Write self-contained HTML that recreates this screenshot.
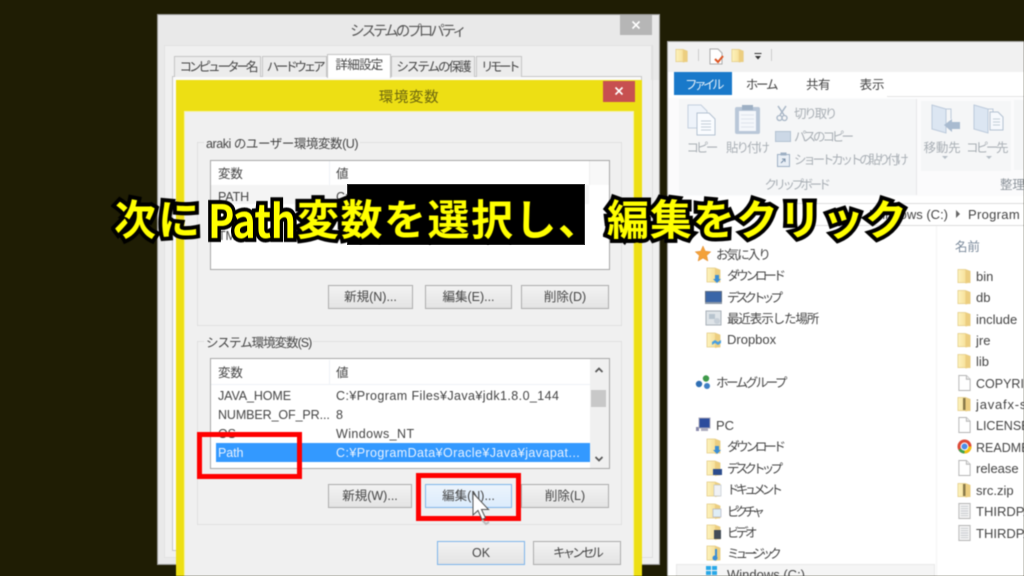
<!DOCTYPE html>
<html lang="ja"><head><meta charset="utf-8"><title>環境変数</title>
<style>
html,body{margin:0;padding:0;background:#1f1d04;}
#r{position:relative;width:1024px;height:576px;overflow:hidden;background:#1f1d04;font-family:"Liberation Sans","Noto Sans CJK JP",sans-serif;}
#u{position:absolute;left:0;top:0;width:1024px;height:576px;filter:blur(.55px);}
.b{position:absolute;box-sizing:border-box;}
.t{position:absolute;white-space:nowrap;font-size:12.5px;line-height:16px;height:16px;color:#444;letter-spacing:-.1px;margin-top:1px;}
.f{font-size:13px;letter-spacing:0;}
.v{letter-spacing:.42px;}
.c{transform:translateX(-50%);}
.btn{position:absolute;box-sizing:border-box;height:24px;background:linear-gradient(#f2f2f2,#e4e4e4);border:1px solid #acacac;text-align:center;font-size:12.5px;line-height:23px;color:#444;white-space:nowrap;}
.hi{border:1px solid #7eb4ea;background:linear-gradient(#ecf4fc,#dcecfc);}
.tab{position:absolute;box-sizing:border-box;background:#ececec;border:1px solid #c4c4c4;border-bottom:0;text-align:center;font-size:12.5px;line-height:20px;color:#444;white-space:nowrap;}
.red{position:absolute;box-sizing:border-box;border:5px solid #f00;}
.n{position:absolute;left:727px;}
.d{color:#a9afb5;}
svg.i{position:absolute;overflow:visible;}
.big{position:absolute;top:192px;height:52px;line-height:52px;white-space:nowrap;font-size:42px;font-weight:700;color:#ff0;-webkit-text-stroke:8px #000;paint-order:stroke fill;stroke-linejoin:round;font-family:"Noto Sans CJK JP",sans-serif;filter:blur(.4px);}
</style></head><body>
<div id="r">
<svg width="0" height="0" style="position:absolute">
<defs>
<linearGradient id="fg" x1="0" x2="1" y1="0" y2="0"><stop offset="0" stop-color="#fdf3bd"/><stop offset=".55" stop-color="#f8e3a0"/><stop offset="1" stop-color="#e8c770"/></linearGradient>
<symbol id="f" viewBox="0 0 16 18"><path d="M1 2h8l5 2v12H1z" fill="url(#fg)" stroke="#e4cc88" stroke-width=".8"/><path d="M9 2l5 2v12l-5 1z" fill="#ecce80"/></symbol>
<symbol id="p" viewBox="0 0 16 18"><path d="M2 1h8l4 4v12H2z" fill="#fff" stroke="#b4b4b4"/><path d="M10 1v4h4" fill="#eee" stroke="#b4b4b4"/></symbol>
<symbol id="x" viewBox="0 0 16 18"><path d="M2 1h12v16H2z" fill="#f4f4f4" stroke="#b4b4b4"/><path d="M4 4h8M4 6.500h8M4 9h8M4 11.500h8M4 14h8" stroke="#c4c8cc"/></symbol>
</defs></svg>
<div id="u">
<!-- system properties window -->
<div class="b" style="left:157px;top:14px;width:503px;height:551px;background:#e9e9e9;border:1px solid #9a9a9a;"></div>
<div class="b" style="left:620px;top:15px;width:32px;height:20px;background:#b6b6b6;"></div>
<svg class="i" style="left:631px;top:20px" width="10" height="10"><path d="M1.500 1.500l7 7M8.500 1.500l-7 7" stroke="#fff" stroke-width="1.600"/></svg>
<div class="t c" style="left:407px;top:22px;font-size:14.5px;line-height:18px;height:18px;letter-spacing:-3px;color:#555;">システムのプロパティ</div>
<div class="b" style="left:164px;top:45px;width:488px;height:513px;background:#f0f0f0;border:1px solid #e2e2e2;"></div>
<div class="b" style="left:172px;top:76px;width:470px;height:475px;background:#fafafa;border:1px solid #c8c8c8;"></div>
<div class="tab" style="left:174px;top:56px;width:87px;height:21px;letter-spacing:-3px;">コンピューター名</div>
<div class="tab" style="left:262px;top:56px;width:65px;height:21px;letter-spacing:-3.200px;">ハードウェア</div>
<div class="tab" style="left:327px;top:54px;width:64px;height:24px;background:#fff;line-height:21px;letter-spacing:-.7px;">詳細設定</div>
<div class="tab" style="left:391px;top:56px;width:84px;height:21px;letter-spacing:-2px;">システムの保護</div>
<div class="tab" style="left:476px;top:56px;width:46px;height:21px;letter-spacing:-3.500px;">リモート</div>
<!-- env var dialog -->
<div class="b" style="left:176px;top:80px;width:466px;height:496px;background:#eddf14;"></div>
<div class="b" style="left:603px;top:81px;width:32px;height:21px;background:#c75050;"></div>
<svg class="i" style="left:614px;top:86px" width="10" height="10"><path d="M1.500 1.500l7 7M8.500 1.500l-7 7" stroke="#fff" stroke-width="1.600"/></svg>
<div class="t c" style="left:409px;top:88px;font-size:14.500px;line-height:18px;height:18px;color:#6b6510;letter-spacing:.6px;">環境変数</div>
<div class="b" style="left:184px;top:111px;width:450px;height:465px;background:#f0f0f0;border:1px solid #f6f3b0;border-bottom:0;"></div>
<!-- user group -->
<div class="b" style="left:197px;top:142px;width:425px;height:184px;border:1px solid #e0e0e0;"></div>
<div class="t" style="left:204px;top:135px;padding:0 2px;background:#f0f0f0;letter-spacing:-.45px;">araki のユーザー環境変数(U)</div>
<div class="b" style="left:210px;top:160px;width:400px;height:110px;background:#fff;border:1px solid #a8a8a8;"></div>
<div class="b" style="left:211px;top:185px;width:378px;height:19px;background:#f4f4f4;"></div>
<div class="b" style="left:329px;top:161px;width:1px;height:24px;background:#eef2f6;"></div>
<div class="b" style="left:589px;top:161px;width:20px;height:24px;background:#f8f8f8;border-left:1px solid #eee;"></div>
<div class="t" style="left:218px;top:165px;">変数</div>
<div class="t" style="left:336px;top:165px;">値</div>
<div class="t" style="left:218px;top:188px;">PATH</div>
<div class="t" style="left:336px;top:188px;">C:</div>
<div class="t" style="left:218px;top:227px;">TMP</div>
<div class="btn" style="left:328px;top:285px;width:85px;">新規(N)...</div>
<div class="btn" style="left:425px;top:285px;width:87px;">編集(E)...</div>
<div class="btn" style="left:521px;top:285px;width:88px;">削除(D)</div>
<!-- system group -->
<div class="b" style="left:197px;top:341px;width:425px;height:184px;border:1px solid #e0e0e0;"></div>
<div class="t" style="left:204px;top:334px;padding:0 2px;background:#f0f0f0;letter-spacing:-1px;">システム環境変数(S)</div>
<div class="b" style="left:210px;top:358px;width:400px;height:111px;background:#fff;border:1px solid #a8a8a8;"></div>
<div class="b" style="left:590px;top:359px;width:19px;height:109px;background:#f0f0f0;"></div>
<div class="b" style="left:591px;top:390px;width:15px;height:17px;background:#c8c8c8;"></div>
<svg class="i" style="left:594px;top:366px" width="10" height="8"><path d="M1.500 6l3.500-3.500L8.500 6" stroke="#555" stroke-width="1.700" fill="none"/></svg>
<svg class="i" style="left:594px;top:455px" width="10" height="8"><path d="M1.500 2l3.500 3.500L8.500 2" stroke="#555" stroke-width="1.700" fill="none"/></svg>
<div class="b" style="left:329px;top:360px;width:1px;height:24px;background:#eef2f6;"></div>
<div class="b" style="left:211px;top:384px;width:379px;height:1px;background:#eef2f6;"></div>
<div class="t" style="left:218px;top:364px;">変数</div>
<div class="t" style="left:336px;top:364px;">値</div>
<div class="t" style="left:218px;top:387px;">JAVA_HOME</div>
<div class="t v" style="left:336px;top:387px;">C:¥Program Files¥Java¥jdk1.8.0_144</div>
<div class="t" style="left:218px;top:406px;">NUMBER_OF_PR...</div>
<div class="t" style="left:336px;top:406px;">8</div>
<div class="t" style="left:218px;top:425px;">OS</div>
<div class="t v" style="left:336px;top:425px;">Windows_NT</div>
<div class="b" style="left:216px;top:443px;width:374px;height:19px;background:#3399ff;"></div>
<div class="t" style="left:218px;top:444px;color:#e8f2ff;">Path</div>
<div class="t" style="left:336px;top:444px;color:#e8f2ff;letter-spacing:.42px;">C:¥ProgramData¥Oracle¥Java¥javapat...</div>
<div class="btn" style="left:328px;top:484px;width:84px;">新規(W)...</div>
<div class="btn hi" style="left:425px;top:484px;width:87px;">編集(N)...</div>
<div class="btn" style="left:521px;top:484px;width:88px;">削除(L)</div>
<div class="btn" style="left:437px;top:541px;width:88px;border:1px solid #7eb4ea;">OK</div>
<div class="btn" style="left:533px;top:541px;width:88px;letter-spacing:-2.900px;">キャンセル</div>
<!-- system window right strip -->
<div class="b" style="left:642px;top:80px;width:17px;height:484px;background:#efefef;"></div>
<div class="b" style="left:652px;top:45px;width:1px;height:513px;background:#dedede;"></div>
<div class="b" style="left:642px;top:557px;width:10px;height:1px;background:#dedede;"></div>
<!-- explorer -->
<div class="b" style="left:667px;top:41px;width:357px;height:535px;background:#fff;border:1px solid #a8a8a8;border-right:0;border-bottom:0;"></div>
<div class="b" style="left:668px;top:42px;width:356px;height:30px;background:#f1f1f1;"></div>
<svg class="i" style="left:675px;top:47px" width="14" height="17"><use href="#f"/></svg>
<div class="b" style="left:698px;top:49px;width:1px;height:12px;background:#ccc;"></div>
<svg class="i" style="left:709px;top:48px" width="16" height="17"><path d="M1 1h8l4 4v11H1z" fill="#fff" stroke="#aaa"/><path d="M6 11l3 3 5-6" stroke="#dd5522" stroke-width="2" fill="none"/></svg>
<svg class="i" style="left:731px;top:47px" width="14" height="17"><use href="#f"/></svg>
<svg class="i" style="left:754px;top:53px" width="8" height="8"><path d="M.5 0.500h7" stroke="#333"/><path d="M1 3h6L4 6.500z" fill="#333"/></svg>
<div class="b" style="left:771px;top:49px;width:1px;height:12px;background:#ccc;"></div>
<div class="b" style="left:668px;top:72px;width:356px;height:26px;background:#fff;"></div>
<div class="b" style="left:674px;top:72px;width:58px;height:23px;background:#1979ca;"></div>
<div class="t c" style="left:703px;top:76px;color:#e4f0fa;letter-spacing:-3.500px;">ファイル</div>
<div class="t c" style="left:761px;top:76px;letter-spacing:-2.200px;">ホーム</div>
<div class="t c" style="left:818px;top:76px;letter-spacing:-.5px;">共有</div>
<div class="t c" style="left:872px;top:76px;">表示</div>
<div class="b" style="left:668px;top:98px;width:356px;height:98px;background:#fbfbfc;"></div>
<div class="b" style="left:887px;top:96px;width:137px;height:1px;background:#e4e4e4;"></div>
<div class="b" style="left:679px;top:99px;width:238px;height:96px;background:#f5f6f7;border-right:1px solid #e8e8e8;"></div>
<div class="b" style="left:921px;top:101px;width:90px;height:70px;background:#f5f6f7;"></div>
<svg class="i" style="left:687px;top:104px" width="30" height="32"><path d="M1 1h13l6 6v17H1z" fill="#eef3fa" stroke="#c4d0de"/><path d="M10 9h12l6 6v16H10z" fill="#fafcff" stroke="#b4c2d2"/><path d="M14 17h10M14 20h10M14 23h10M14 26h10" stroke="#c4ced8"/></svg>
<svg class="i" style="left:734px;top:104px" width="28" height="32"><rect x="1" y="3" width="25" height="27" rx="2" fill="#b9c7d8"/><rect x="5" y="7" width="17" height="20" fill="#f4f7fb"/><rect x="8" y="1" width="11" height="5" fill="#9eb0c4"/><path d="M7 11h13M7 15h13M7 19h13M7 23h13" stroke="#dde4ec"/></svg>
<svg class="i" style="left:776px;top:105px" width="12" height="17"><path d="M2 1l6 9M10 1L4 10" stroke="#a8b6c6" stroke-width="1.500"/><circle cx="3.500" cy="13" r="2.500" fill="none" stroke="#a8b6c6" stroke-width="1.300"/><circle cx="8.500" cy="13" r="2.500" fill="none" stroke="#a8b6c6" stroke-width="1.300"/></svg>
<div class="b" style="left:775px;top:131px;width:16px;height:11px;background:#ccd8e6;border:1px solid #b4c2d2;"></div>
<svg class="i" style="left:777px;top:152px" width="13" height="15"><rect x=".5" y="2.500" width="12" height="12" fill="#e8eef5" stroke="#9eb0c4"/><rect x="3.500" y=".5" width="6" height="3" fill="#9eb0c4"/><path d="M4 11l4-4M5 7h3v3" stroke="#7a90a8" fill="none"/></svg>
<div class="t c d" style="left:701px;top:139px;letter-spacing:-2.800px;">コピー</div>
<div class="t c d" style="left:747px;top:139px;letter-spacing:-2px;">貼り付け</div>
<div class="t d" style="left:794px;top:105px;letter-spacing:-2.200px;">切り取り</div>
<div class="t d" style="left:794px;top:128px;letter-spacing:-3px;">パスのコピー</div>
<div class="t d" style="left:794px;top:151px;letter-spacing:-3.200px;">ショートカットの貼り付け</div>
<div class="t c d" style="left:796px;top:176px;letter-spacing:-3.500px;">クリップボード</div>
<svg class="i" style="left:931px;top:104px" width="30" height="34"><path d="M1 1l14 4v24L1 25z" fill="#dce6f2" stroke="#bccadb"/><path d="M15 5h5v10" fill="none" stroke="#bccadb"/><path d="M13 21l8-6v3h8v7h-8v3z" fill="#a9bbd0"/></svg>
<svg class="i" style="left:973px;top:104px" width="32" height="34"><path d="M1 1l14 4v24L1 25z" fill="#dce6f2" stroke="#bccadb"/><path d="M15 5h5v4" fill="none" stroke="#bccadb"/><path d="M17 8h8l5 5v13H17z" fill="#f6f9fd" stroke="#b4c2d2"/><path d="M20 15h7M20 18h7M20 21h7" stroke="#c4ced8"/></svg>
<div class="t c d" style="left:942px;top:139px;letter-spacing:-.2px;">移動先</div>
<div class="t c d" style="left:986px;top:139px;letter-spacing:-2.500px;">コピー先</div>
<svg class="i" style="left:942px;top:156px" width="60" height="5"><path d="M0 0h6L3 3z" fill="#b4bcc4"/><path d="M44 0h6L47 3z" fill="#b4bcc4"/></svg>
<div class="t" style="left:1000px;top:176px;color:#8d949b;">整理</div>
<div class="b" style="left:1014px;top:100px;width:10px;height:70px;background:#f5f6f7;"></div>
<!-- address -->
<div class="b" style="left:785px;top:203px;width:239px;height:23px;background:#fff;border:1px solid #dcdcdc;border-right:0;"></div>
<div class="t f" style="left:870px;top:206px;">Windows (C:)</div>
<svg class="i" style="left:955px;top:210px" width="6" height="8"><path d="M1 0l4 4-4 4z" fill="#666"/></svg>
<div class="t f" style="left:968px;top:206px;letter-spacing:.3px;">Program</div>
<!-- nav -->
<svg class="i" style="left:695px;top:246px" width="16" height="16"><path d="M8 0l2.300 5.200 5.500.6-4.100 3.700 1.200 5.500L8 12.100 3.100 15l1.200-5.500L.2 5.800l5.500-.6z" fill="#f3a13a" stroke="#e08a2a" stroke-width=".5"/></svg>
<div class="t" style="left:716px;top:246px;letter-spacing:-1.900px;">お気に入り</div>
<svg class="i" style="left:706px;top:266px" width="16" height="18"><use href="#f"/><path d="M9 9h4v4h2l-4 4-4-4h2z" fill="#3a8ed6"/></svg>
<div class="t n" style="top:267px;letter-spacing:-3.200px;">ダウンロード</div>
<svg class="i" style="left:705px;top:291px" width="17" height="14"><rect x=".5" y=".5" width="16" height="11" fill="#3a66a8" stroke="#5a6a80"/><rect y="11" width="17" height="2" fill="#8a96a6"/></svg>
<div class="t n" style="top:289px;letter-spacing:-3.800px;">デスクトップ</div>
<svg class="i" style="left:705px;top:310px" width="17" height="16"><rect x="1" y="1" width="15" height="14" fill="#dfe4e8" stroke="#a8b0b8"/><path d="M4 4h6v5H4z" fill="#b8c4ce"/><circle cx="12" cy="11" r="3" fill="#c8d0d8"/></svg>
<div class="t n" style="top:310px;letter-spacing:-1.100px;">最近表示した場所</div>
<svg class="i" style="left:706px;top:331px" width="16" height="18"><use href="#f"/><path d="M10 7l3 2 3-2v3l-3 2-3-2 -3 2v-3z" fill="#4aa0e0" transform="translate(-1 2)"/></svg>
<div class="t n f" style="top:331px;">Dropbox</div>
<svg class="i" style="left:695px;top:374px" width="16" height="16"><circle cx="4" cy="10" r="3.200" fill="#2f6fb4"/><circle cx="11" cy="4.500" r="3.200" fill="#3f9a4a"/><circle cx="12" cy="12" r="3" fill="#3f7fc4"/></svg>
<div class="t" style="left:716px;top:374px;letter-spacing:-2.500px;">ホームグループ</div>
<svg class="i" style="left:695px;top:417px" width="16" height="16"><rect x="1" y="10" width="3" height="4" fill="#88a"/><rect x="4" y="1" width="11" height="10" fill="#2c4c9c" stroke="#aab"/><rect x="6" y="11" width="7" height="3" fill="#aab"/></svg>
<div class="t f" style="left:716px;top:417px;">PC</div>
<svg class="i" style="left:706px;top:437px" width="16" height="18"><use href="#f"/><path d="M9 9h4v4h2l-4 4-4-4h2z" fill="#3a8ed6"/></svg>
<div class="t n" style="top:438px;letter-spacing:-3.200px;">ダウンロード</div>
<svg class="i" style="left:706px;top:459px" width="16" height="18"><use href="#f"/><rect x="7" y="10" width="9" height="6" fill="#2c4c8c"/></svg>
<div class="t n" style="top:460px;letter-spacing:-3.800px;">デスクトップ</div>
<svg class="i" style="left:706px;top:480px" width="16" height="18"><use href="#f"/><rect x="8" y="5" width="7" height="11" fill="#f0f2f5" stroke="#b8c0c8" stroke-width=".6"/></svg>
<div class="t n" style="top:481px;letter-spacing:-3.800px;">ドキュメント</div>
<svg class="i" style="left:706px;top:502px" width="16" height="18"><use href="#f"/><rect x="7" y="7" width="8" height="8" fill="#dfeef5" stroke="#aab" stroke-width=".6"/></svg>
<div class="t n" style="top:503px;letter-spacing:-4px;">ピクチャ</div>
<svg class="i" style="left:706px;top:523px" width="16" height="18"><use href="#f"/><rect x="8" y="7" width="7" height="9" fill="#444c56"/></svg>
<div class="t n" style="top:524px;letter-spacing:-3.500px;">ビデオ</div>
<svg class="i" style="left:706px;top:544px" width="16" height="18"><use href="#f"/><path d="M10 5v9" stroke="#3a8ed6" stroke-width="2"/><circle cx="9" cy="14" r="2.500" fill="#3a8ed6"/></svg>
<div class="t n" style="top:545px;letter-spacing:-4px;">ミュージック</div>
<div class="b" style="left:676px;top:564px;width:259px;height:12px;background:#f5f5f5;border:1px solid #e8e8e8;border-bottom:0;"></div>
<svg class="i" style="left:706px;top:566px" width="16" height="10"><rect width="5" height="4" fill="#29a8e8"/><rect x="6" width="5" height="4" fill="#29a8e8"/><rect y="5" width="5" height="4" fill="#29a8e8"/><rect x="6" y="5" width="5" height="4" fill="#29a8e8"/></svg>
<div class="t n f" style="top:566px;">Windows (C:)</div>
<div class="b" style="left:936px;top:226px;width:1px;height:350px;background:#f4f4f4;"></div>
<!-- files -->
<div class="t d" style="left:955px;top:238px;color:#7c8b9c;">名前</div>
<svg class="i" style="left:957px;top:267px" width="15" height="18"><use href="#f"/></svg><div class="t f" style="left:976px;top:268px;">bin</div>
<svg class="i" style="left:957px;top:288px" width="15" height="18"><use href="#f"/></svg><div class="t f" style="left:976px;top:289px;">db</div>
<svg class="i" style="left:957px;top:310px" width="15" height="18"><use href="#f"/></svg><div class="t f" style="left:976px;top:311px;">include</div>
<svg class="i" style="left:957px;top:331px" width="15" height="18"><use href="#f"/></svg><div class="t f" style="left:976px;top:332px;">jre</div>
<svg class="i" style="left:957px;top:352px" width="15" height="18"><use href="#f"/></svg><div class="t f" style="left:976px;top:353px;">lib</div>
<svg class="i" style="left:957px;top:374px" width="15" height="18"><use href="#p"/></svg><div class="t" style="left:976px;top:375px;letter-spacing:0;">COPYRIGHT</div>
<svg class="i" style="left:957px;top:395px" width="15" height="18"><use href="#f"/><rect x="6" y="3" width="2.500" height="12" fill="#8a7a4a"/></svg><div class="t f" style="left:976px;top:396px;letter-spacing:.8px;">javafx-src.zip</div>
<svg class="i" style="left:957px;top:416px" width="15" height="18"><use href="#p"/></svg><div class="t" style="left:976px;top:417px;letter-spacing:0;">LICENSE</div>
<svg class="i" style="left:957px;top:439px" width="15" height="15"><circle cx="7.500" cy="7.500" r="7" fill="#dd4b39"/><path d="M7.500 7.500L1.500 11A7 7 0 0 0 7.500 14.500z" fill="#3fa34d"/><path d="M7.500 7.500L7.500 14.500A7 7 0 0 0 14.500 7.500z" fill="#f4c20d"/><circle cx="7.500" cy="7.500" r="3.500" fill="#4a8de8" stroke="#fff"/></svg><div class="t" style="left:976px;top:439px;letter-spacing:0;">README.html</div>
<svg class="i" style="left:957px;top:459px" width="15" height="18"><use href="#p"/></svg><div class="t f" style="left:976px;top:460px;">release</div>
<svg class="i" style="left:957px;top:481px" width="15" height="18"><use href="#f"/><rect x="6" y="3" width="2.500" height="12" fill="#8a7a4a"/></svg><div class="t f" style="left:976px;top:482px;">src.zip</div>
<svg class="i" style="left:957px;top:502px" width="15" height="18"><use href="#x"/></svg><div class="t f" style="left:976px;top:503px;">THIRDPARTY</div>
<svg class="i" style="left:957px;top:524px" width="15" height="18"><use href="#x"/></svg><div class="t f" style="left:976px;top:525px;">THIRDPARTY</div>
<!-- highlight boxes -->
<div class="red" style="left:197px;top:432px;width:105px;height:47px;"></div>
<div class="red" style="left:416px;top:473px;width:105px;height:48px;border-width:5.500px;"></div>
<svg class="i" style="left:472px;top:492px" width="22" height="34"><path d="M1 1v22l5-4.500 4 9 3.500-1.500-4-8.500h7z" fill="#fff" stroke="#555" stroke-width="1"/><path d="M10 28l4 4 3-2" fill="none" stroke="#bbb" stroke-width="2"/></svg>
</div>
<!-- blackout + caption -->
<div class="b" style="left:347px;top:184px;width:238px;height:61px;background:#000;border:1px solid #333;"></div>
<div class="big" style="left:114px;letter-spacing:2px;">次に</div>
<div class="big" style="left:208px;top:193px;font-size:46px;letter-spacing:-.5px;transform:scaleX(.86);transform-origin:left center;">Path</div>
<div class="big" style="left:297px;letter-spacing:1.500px;">変数を選択し、</div>
<div class="big" style="left:607px;letter-spacing:1px;">編集をクリック</div>
</div>
</body></html>
